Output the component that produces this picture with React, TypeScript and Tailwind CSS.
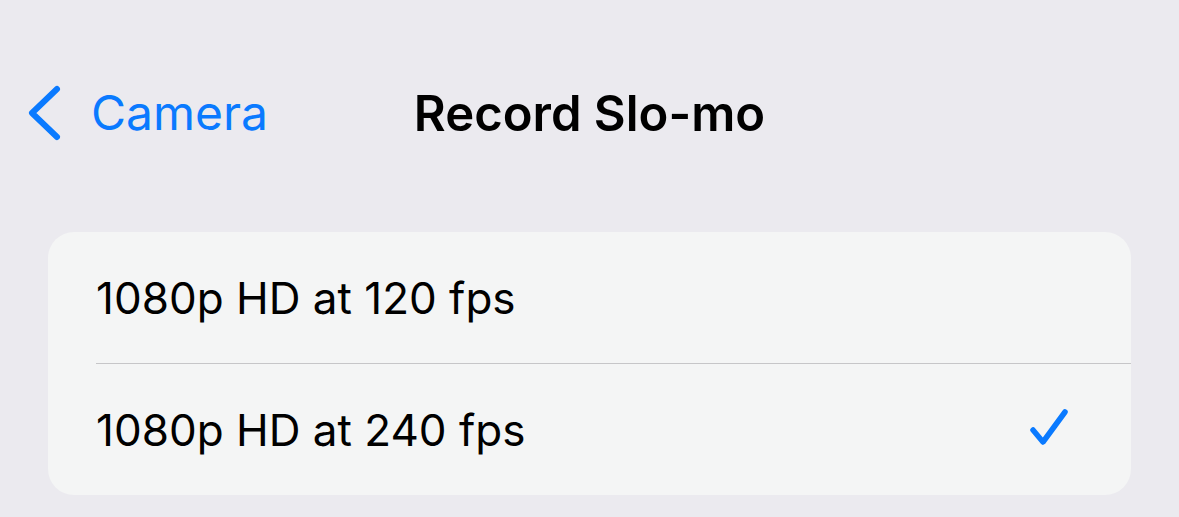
import React from "react";

export default function App() {
  return (
    <div
      className="w-[1179px] h-[517px] bg-[#EBEAEF] overflow-hidden"
      style={{ fontFamily: "Inter, 'Liberation Sans', sans-serif" }}
    >
      <div className="relative h-[228px] flex items-start">
        <div className="h-[228px] w-full flex items-start pt-[80px]">
          <div className="flex items-center h-[66px] pl-[26px] text-[#0A7AFF]">
            <svg width="40" height="60" viewBox="0 0 40 60" className="mr-[25px]">
              <path
                d="M31 6 L6 30 L31 54"
                fill="none"
                stroke="#0A7AFF"
                strokeWidth="6"
                strokeLinecap="round"
                strokeLinejoin="round"
              />
            </svg>
            <span className="text-[48px] tracking-[0px] leading-none">Camera</span>
          </div>
        </div>
        <div className="absolute left-0 right-0 top-[80px] h-[66px] flex items-center justify-center">
          <span className="text-[49px] font-semibold text-black leading-none">Record Slo-mo</span>
        </div>
      </div>
      <div className="mx-[48px] mt-[4px] w-[1083px] rounded-[26px] bg-[#F4F5F5] overflow-hidden">
        <div className="h-[131px] flex items-center pl-[48px] pr-[60px]">
          <span className="text-[44px] text-black leading-none">1080p HD at 120 fps</span>
        </div>
        <div className="ml-[48px] h-px bg-[#C6C6C8]" />
        <div className="h-[131px] flex items-center justify-between pl-[48px] pr-[58px]">
          <span className="text-[44px] text-black leading-none">1080p HD at 240 fps</span>
          <svg width="44" height="44" viewBox="0 0 44 44">
            <path
              d="M4 22 L14 34 L36 4"
              fill="none"
              stroke="#0A7AFF"
              strokeWidth="5.5"
              strokeLinecap="round"
              strokeLinejoin="round"
            />
          </svg>
        </div>
      </div>
    </div>
  );
}
